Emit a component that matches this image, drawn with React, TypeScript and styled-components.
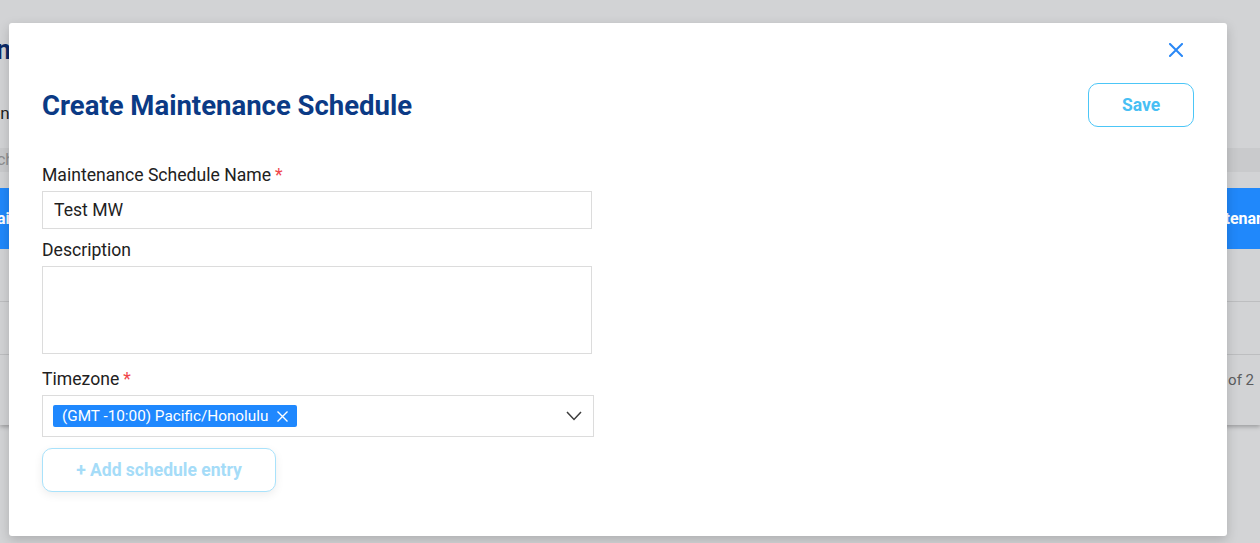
import React from 'react';
import styled, { createGlobalStyle } from 'styled-components';

const GlobalStyle = createGlobalStyle`
  html, body {
    margin: 0;
    padding: 0;
    width: 1260px;
    height: 543px;
    overflow: hidden;
    background: #d3d4d6;
    font-family: Roboto, "Liberation Sans", Arial, sans-serif;
  }
  * { box-sizing: border-box; }
`;

// the page behind the dialog, already dimmed by the backdrop
const Page = styled.div`
  position: relative;
  width: 1260px;
  height: 543px;
  overflow: hidden;
  background: #d3d4d6;
`;

const PageCard = styled.div`
  height: 425px;
  padding-top: 34px;
  background: #d2d3d5;
  box-shadow: 0 2px 4px rgba(0, 0, 0, 0.25);
  display: flex;
  flex-direction: column;
  overflow: hidden;
`;

const PageTitle = styled.h1`
  margin: 0 0 0 -88px;
  font-size: 27px;
  line-height: 32px;
  font-weight: 700;
  color: #0c2a66;
  white-space: nowrap;
`;

const PageSub = styled.div`
  margin: 37px 0 0 -52px;
  font-size: 17px;
  line-height: 20px;
  color: #1e1e1e;
  white-space: nowrap;
`;

const PageSearch = styled.div`
  margin-top: 25px;
  height: 24px;
  background: #c9cacc;
  color: #8d8e90;
  font-size: 16px;
  line-height: 24px;
  text-indent: -35px;
  white-space: nowrap;
`;

const TableHead = styled.div`
  margin-top: 16px;
  height: 61px;
  background: #2088fb;
  color: #fff;
  font-weight: 700;
  font-size: 16px;
  display: flex;
  align-items: center;
  justify-content: space-between;
  white-space: nowrap;
  overflow: hidden;
`;

const HeadCell = styled.span<{ $left?: number; $right?: number }>`
  margin-left: ${p => p.$left ?? 0}px;
  margin-right: ${p => p.$right ?? 0}px;
`;

const TableRow = styled.div`
  height: 53px;
  border-bottom: 1px solid #bdbec0;
`;

const Pager = styled.div`
  display: flex;
  justify-content: flex-end;
  padding: 16px 6px 0 0;
  font-size: 15px;
  color: #5b5c5e;
`;

const Modal = styled.div`
  position: absolute;
  left: 9px;
  top: 23px;
  width: 1218px;
  height: 513px;
  background: #fff;
  border-radius: 3px;
  box-shadow: 0 4px 12px rgba(0, 0, 0, 0.18);
  padding: 20px 33px 0 33px;
  display: flex;
  flex-direction: column;
`;

const CloseRow = styled.div`
  display: flex;
  justify-content: flex-end;
  height: 14px;
`;

const CloseButton = styled.button`
  margin: 0 11px 0 0;
  padding: 0;
  border: none;
  background: none;
  width: 14px;
  height: 14px;
  display: flex;
  cursor: pointer;
`;

const HeaderRow = styled.div`
  margin-top: 26px;
  display: flex;
  align-items: center;
  justify-content: space-between;
  height: 44px;
`;

const Title = styled.h2`
  margin: 0;
  font-size: 27.5px;
  font-weight: 700;
  color: #0b3a85;
`;

const OutlineButton = styled.button<{ $faded?: boolean }>`
  height: 44px;
  border-radius: 10px;
  background: #fff;
  border: 1px solid ${p => (p.$faded ? '#a9e2fb' : '#4cc6f7')};
  color: ${p => (p.$faded ? '#a5dcf8' : '#48bff4')};
  font-family: Roboto, "Liberation Sans", Arial, sans-serif;
  font-weight: 700;
  font-size: 17.5px;
  cursor: pointer;
  box-shadow: ${p => (p.$faded ? '0 3px 10px rgba(0, 0, 0, 0.07)' : 'none')};
`;

const SaveButton = styled(OutlineButton)`
  width: 106px;
`;

const AddButton = styled(OutlineButton)`
  width: 234px;
  margin-top: 11px;
`;

const Form = styled.div`
  margin-top: 38px;
  width: 552px;
  display: flex;
  flex-direction: column;
`;

const Label = styled.label<{ $gap: number }>`
  display: block;
  margin-top: ${p => p.$gap}px;
  font-size: 17.6px;
  line-height: 20px;
  color: #212121;
`;

const Required = styled.span`
  color: #f0464b;
  margin-left: 4px;
`;

const TextInput = styled.input`
  margin-top: 6px;
  width: 550px;
  height: 38px;
  border: 1px solid #dcdcdc;
  padding: 0 11px;
  font-family: Roboto, "Liberation Sans", Arial, sans-serif;
  font-size: 17.6px;
  color: #1f1f1f;
  outline: none;
`;

const TextArea = styled.textarea`
  display: block;
  margin-top: 6px;
  width: 550px;
  height: 88px;
  border: 1px solid #dcdcdc;
  resize: none;
  outline: none;
  font-family: Roboto, "Liberation Sans", Arial, sans-serif;
`;

const Select = styled.div`
  margin-top: 6px;
  width: 552px;
  height: 42px;
  border: 1px solid #dcdcdc;
  display: flex;
  align-items: center;
  padding: 0 11px 0 10px;
`;

const Tag = styled.span`
  height: 22px;
  background: #1f88fe;
  color: #fff;
  border-radius: 2px;
  display: inline-flex;
  align-items: center;
  gap: 9px;
  padding: 0 9px;
  font-size: 15.3px;
  white-space: nowrap;
`;

const Chevron = styled.span`
  margin-left: auto;
  display: flex;
`;

const App: React.FC = () => {
  return (
    <>
      <GlobalStyle />
      <Page>
        <PageCard>
          <PageTitle>Maintenance Schedules</PageTitle>
          <PageSub>Maintenance windows</PageSub>
          <PageSearch>Search</PageSearch>
          <TableHead>
            <HeadCell $left={-17}>Mai</HeadCell>
            <HeadCell $right={-22}>Add Maintenance</HeadCell>
          </TableHead>
          <TableRow />
          <TableRow />
          <Pager>1 of 2</Pager>
        </PageCard>

        <Modal>
          <CloseRow>
            <CloseButton aria-label="Close">
              <svg width="14" height="14" viewBox="0 0 14 14">
                <path d="M1 1 L13 13 M13 1 L1 13" stroke="#2a88f6" strokeWidth="2" strokeLinecap="square" />
              </svg>
            </CloseButton>
          </CloseRow>

          <HeaderRow>
            <Title>Create Maintenance Schedule</Title>
            <SaveButton>Save</SaveButton>
          </HeaderRow>

          <Form>
            <Label $gap={0}>
              Maintenance Schedule Name<Required>*</Required>
            </Label>
            <TextInput defaultValue="Test MW" />

            <Label $gap={11}>Description</Label>
            <TextArea />

            <Label $gap={15}>
              Timezone<Required>*</Required>
            </Label>
            <Select>
              <Tag>
                (GMT -10:00) Pacific/Honolulu
                <svg width="11" height="11" viewBox="0 0 11 11">
                  <path d="M0.5 0.5 L10.5 10.5 M10.5 0.5 L0.5 10.5" stroke="#fff" strokeWidth="1.4" />
                </svg>
              </Tag>
              <Chevron>
                <svg width="16" height="10" viewBox="0 0 16 10">
                  <path d="M1 1 L8 8.5 L15 1" stroke="#3d3d3d" strokeWidth="1.5" fill="none" />
                </svg>
              </Chevron>
            </Select>

            <AddButton $faded>+ Add schedule entry</AddButton>
          </Form>
        </Modal>
      </Page>
    </>
  );
};

export default App;
